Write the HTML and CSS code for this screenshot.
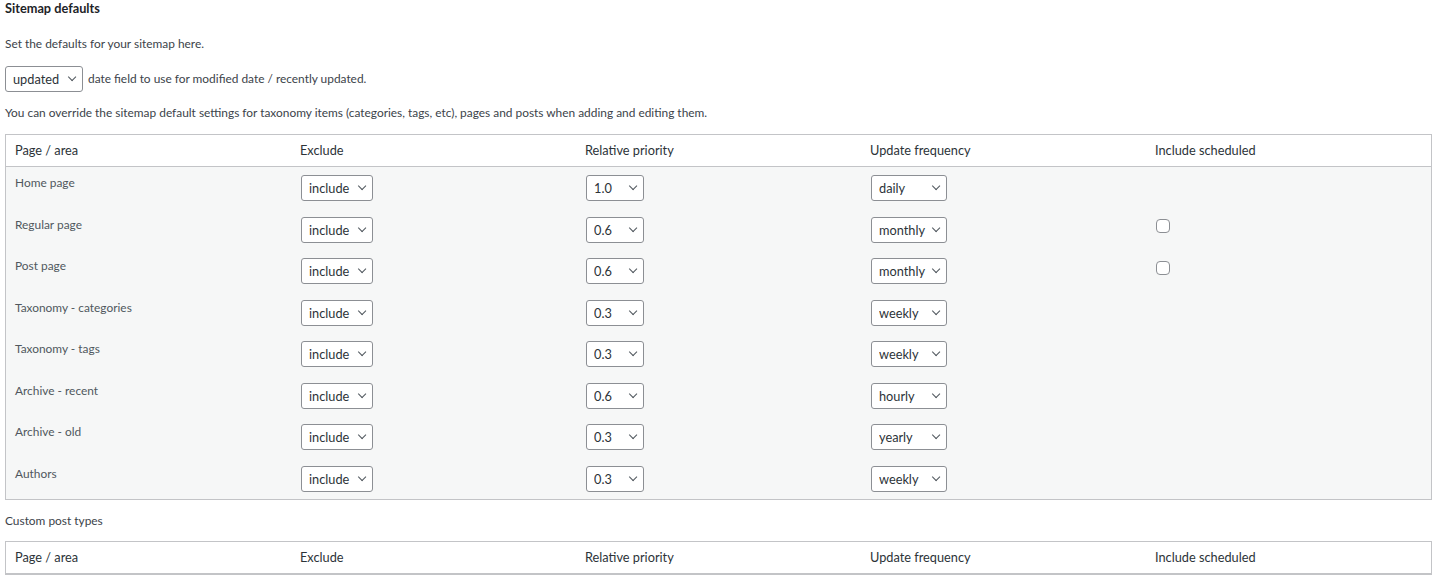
FILE: index.html
```html
<!DOCTYPE html>
<html lang="en">
  <head>
    <meta charset="UTF-8" />
    <meta name="viewport" content="width=device-width, initial-scale=1.0" />
    <title>Sitemap defaults</title>
    <link rel="stylesheet" href="styles.css">
  </head>
  <body>
    <div class="wrap">
      <h3 class="title">Sitemap defaults</h3>
      <p class="intro">Set the defaults for your sitemap here.</p>
      <div class="date-field">
        <span class="sel"><select class="sel-date"><option>updated</option><option>published</option></select></span>
        <span>date field to use for modified date / recently updated.</span>
      </div>
      <p class="note">You can override the sitemap default settings for taxonomy items (categories, tags, etc), pages and posts when adding and editing them.</p>

      <table class="defaults">
        <thead>
          <tr>
            <th>Page / area</th>
            <th>Exclude</th>
            <th>Relative priority</th>
            <th>Update frequency</th>
            <th>Include scheduled</th>
          </tr>
        </thead>
        <tbody>
          <tr>
            <td>Home page</td>
            <td><span class="sel"><select class="sel-ex"><option>include</option><option>exclude</option></select></span></td>
            <td><span class="sel"><select class="sel-pr"><option>1.0</option></select></span></td>
            <td><span class="sel"><select class="sel-fr"><option>daily</option></select></span></td>
            <td></td>
          </tr>
          <tr>
            <td>Regular page</td>
            <td><span class="sel"><select class="sel-ex"><option>include</option><option>exclude</option></select></span></td>
            <td><span class="sel"><select class="sel-pr"><option>0.6</option></select></span></td>
            <td><span class="sel"><select class="sel-fr"><option>monthly</option></select></span></td>
            <td><input type="checkbox" class="check" /></td>
          </tr>
          <tr>
            <td>Post page</td>
            <td><span class="sel"><select class="sel-ex"><option>include</option><option>exclude</option></select></span></td>
            <td><span class="sel"><select class="sel-pr"><option>0.6</option></select></span></td>
            <td><span class="sel"><select class="sel-fr"><option>monthly</option></select></span></td>
            <td><input type="checkbox" class="check" /></td>
          </tr>
          <tr>
            <td>Taxonomy - categories</td>
            <td><span class="sel"><select class="sel-ex"><option>include</option><option>exclude</option></select></span></td>
            <td><span class="sel"><select class="sel-pr"><option>0.3</option></select></span></td>
            <td><span class="sel"><select class="sel-fr"><option>weekly</option></select></span></td>
            <td></td>
          </tr>
          <tr>
            <td>Taxonomy - tags</td>
            <td><span class="sel"><select class="sel-ex"><option>include</option><option>exclude</option></select></span></td>
            <td><span class="sel"><select class="sel-pr"><option>0.3</option></select></span></td>
            <td><span class="sel"><select class="sel-fr"><option>weekly</option></select></span></td>
            <td></td>
          </tr>
          <tr>
            <td>Archive - recent</td>
            <td><span class="sel"><select class="sel-ex"><option>include</option><option>exclude</option></select></span></td>
            <td><span class="sel"><select class="sel-pr"><option>0.6</option></select></span></td>
            <td><span class="sel"><select class="sel-fr"><option>hourly</option></select></span></td>
            <td></td>
          </tr>
          <tr>
            <td>Archive - old</td>
            <td><span class="sel"><select class="sel-ex"><option>include</option><option>exclude</option></select></span></td>
            <td><span class="sel"><select class="sel-pr"><option>0.3</option></select></span></td>
            <td><span class="sel"><select class="sel-fr"><option>yearly</option></select></span></td>
            <td></td>
          </tr>
          <tr>
            <td>Authors</td>
            <td><span class="sel"><select class="sel-ex"><option>include</option><option>exclude</option></select></span></td>
            <td><span class="sel"><select class="sel-pr"><option>0.3</option></select></span></td>
            <td><span class="sel"><select class="sel-fr"><option>weekly</option></select></span></td>
            <td></td>
          </tr>
        </tbody>
      </table>

      <p class="sub">Custom post types</p>

      <table class="defaults custom">
        <thead>
          <tr>
            <th>Page / area</th>
            <th>Exclude</th>
            <th>Relative priority</th>
            <th>Update frequency</th>
            <th>Include scheduled</th>
          </tr>
        </thead>
        <tbody></tbody>
      </table>
    </div>
  </body>
</html>
```

FILE: styles.css
```css
body {
  margin: 0;
  padding: 0;
  background-color: #fff;
  color: #3c434a;
  font-family: 'Segoe UI', Lato, 'Open Sans', sans-serif;
  font-size: 11.9px;
  line-height: 16px;
}
.wrap {
  margin: 0 1px 0 5px;
}
.title {
  margin: 0;
  font-size: 12.75px;
  font-weight: 700;
  line-height: 16px;
  color: #1d2327;
}
.intro {
  margin: 20px 0 0;
}
.date-field {
  display: flex;
  align-items: center;
  gap: 5px;
  margin-top: 14px;
}
.note {
  margin: 13px 0 0;
}
.sel {
  position: relative;
  display: inline-block;
  vertical-align: top;
}
.sel::after {
  content: "";
  position: absolute;
  right: 8px;
  top: 8.2px;
  width: 5.2px;
  height: 5.2px;
  border-right: 1.3px solid #50575e;
  border-bottom: 1.3px solid #50575e;
  transform: rotate(45deg);
  pointer-events: none;
}
.defaults .sel {
  margin-left: 1px;
}
select {
  display: block;
  box-sizing: border-box;
  height: 26px;
  margin: 0;
  padding: 0 20px 0 7px;
  border: 1px solid #8c8f94;
  border-radius: 3px;
  background-color: #fff;
  color: #2c3338;
  font-family: inherit;
  font-size: 12.75px;
  line-height: 24px;
  -webkit-appearance: none;
  appearance: none;
}
.sel-date {
  width: 78px;
}
.sel-ex {
  width: 72px;
}
.sel-pr {
  width: 58px;
}
.sel-fr {
  width: 76px;
}
.defaults {
  width: 100%;
  margin-top: 13px;
  table-layout: fixed;
  border-collapse: separate;
  border-spacing: 0;
  border: 1px solid #c3c4c7;
  background-color: #f6f7f7;
}
.defaults th {
  padding: 7px 9px;
  background-color: #fff;
  border-bottom: 1px solid #c3c4c7;
  color: #2c3338;
  font-size: 12.75px;
  font-weight: 400;
  line-height: 17px;
  text-align: left;
}
.defaults td {
  padding: 8px 9px 7.5px;
  vertical-align: top;
  color: #50575e;
}
.check {
  display: block;
  box-sizing: border-box;
  width: 14px;
  height: 14px;
  margin: 2.5px 0 0 1px;
  border: 1px solid #8c8f94;
  border-radius: 4px;
  background-color: #fff;
  -webkit-appearance: none;
  appearance: none;
}
.sub {
  margin: 13px 0 0;
}
.custom {
  margin-top: 12px;
}
```
